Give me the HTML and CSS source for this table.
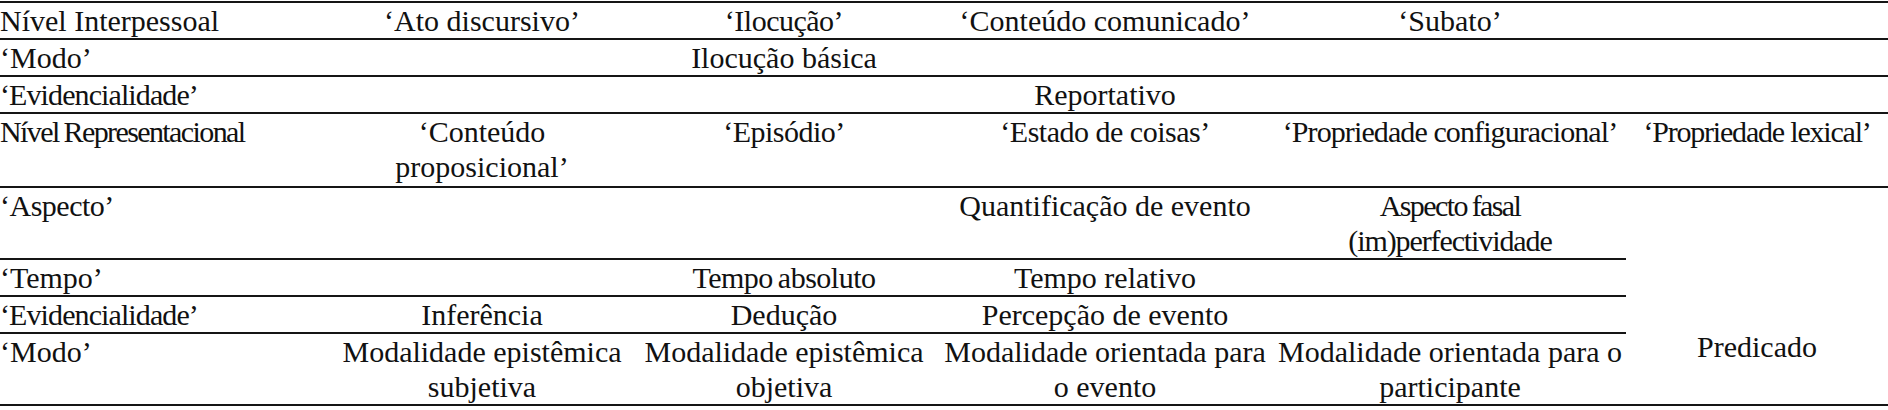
FILE: index.html
```html
<!DOCTYPE html>
<html lang="pt">
<head>
<meta charset="utf-8">
<title>Níveis</title>
<link rel="stylesheet" href="styles.css">
</head>
<body>
<table class="levels">
  <colgroup>
    <col class="c1"><col class="c2"><col class="c3"><col class="c4"><col class="c5"><col class="c6">
  </colgroup>
  <tr>
    <td class="label">Nível Interpessoal</td>
    <td>‘Ato discursivo’</td>
    <td><span class="snug">‘Ilocução’</span></td>
    <td>‘Conteúdo comunicado’</td>
    <td>‘Subato’</td>
    <td></td>
  </tr>
  <tr>
    <td class="label">‘Modo’</td>
    <td></td>
    <td>Ilocução básica</td>
    <td></td>
    <td></td>
    <td></td>
  </tr>
  <tr>
    <td class="label"><span class="slim">‘Evidencialidade’</span></td>
    <td></td>
    <td></td>
    <td>Reportativo</td>
    <td></td>
    <td></td>
  </tr>
  <tr class="double">
    <td class="label"><span class="narrow">Nível Representacional</span></td>
    <td>‘Conteúdo<br>proposicional’</td>
    <td><span class="snug">‘Episódio’</span></td>
    <td><span class="snug">‘Estado de coisas’</span></td>
    <td><span class="slim">‘Propriedade configuracional’</span></td>
    <td><span class="slimmer">‘Propriedade lexical’</span></td>
  </tr>
  <tr>
    <td class="label"><span class="snug">‘Aspecto’</span></td>
    <td></td>
    <td></td>
    <td>Quantificação de evento</td>
    <td><span class="narrow">Aspecto fasal</span><br><span class="narrower">(im)perfectividade</span></td>
    <td class="open"></td>
  </tr>
  <tr>
    <td class="label">‘Tempo’</td>
    <td></td>
    <td><span class="tight">Tempo absoluto</span></td>
    <td>Tempo relativo</td>
    <td></td>
    <td class="open"></td>
  </tr>
  <tr>
    <td class="label"><span class="slim">‘Evidencialidade’</span></td>
    <td>Inferência</td>
    <td>Dedução</td>
    <td>Percepção de evento</td>
    <td></td>
    <td class="open"></td>
  </tr>
  <tr>
    <td class="label">‘Modo’</td>
    <td>Modalidade epistêmica<br>subjetiva</td>
    <td>Modalidade epistêmica<br>objetiva</td>
    <td>Modalidade orientada para<br>o evento</td>
    <td>Modalidade orientada para o<br>participante</td>
    <td class="pred">Predicado</td>
  </tr>
</table>
</body>
</html>
```

FILE: styles.css
```css
html, body {
  margin: 0;
  padding: 0;
  background: #ffffff;
}

body {
  font-family: "Liberation Serif", "Times New Roman", serif;
  font-size: 30px;
  color: #111111;
}

.levels {
  width: 1888px;
  margin-top: 1px;
  border-collapse: collapse;
  table-layout: fixed;
  border-top: 2px solid #151515;
}

.c1 { width: 332px; }
.c2 { width: 300px; }
.c3 { width: 304px; }
.c4 { width: 338px; }
.c5 { width: 352px; }
.c6 { width: 262px; }

.levels td {
  padding: 0;
  line-height: 35px;
  text-align: center;
  vertical-align: top;
  white-space: nowrap;
  border-bottom: 2px solid #151515;
}

.levels td.label {
  text-align: left;
}

.levels td.open {
  border-bottom: none;
}

.levels td.pred {
  line-height: 27px;
}

.levels tr.double td {
  padding-bottom: 2px;
}

.narrow {
  letter-spacing: -1.6px;
  word-spacing: -1px;
}

.narrower {
  letter-spacing: -1.1px;
}

.tight {
  letter-spacing: -0.5px;
  word-spacing: -2px;
}

.snug {
  letter-spacing: -0.5px;
}

.slim {
  letter-spacing: -0.9px;
}

.slimmer {
  letter-spacing: -1.2px;
}
```
